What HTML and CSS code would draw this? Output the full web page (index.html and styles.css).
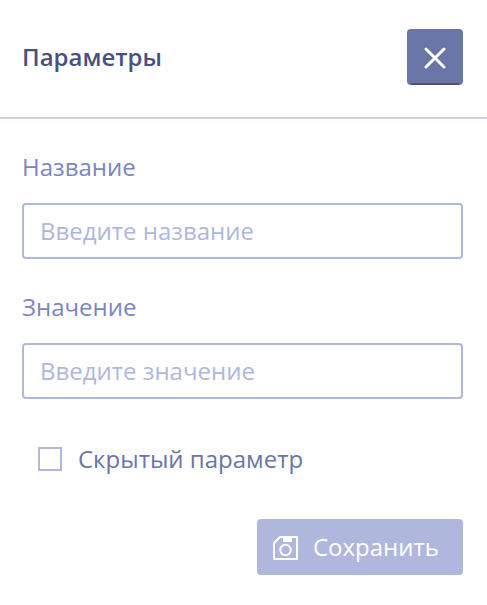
FILE: index.html
```
<!DOCTYPE html>
<html lang="ru">
<head>
  <meta charset="UTF-8" />
  <meta name="viewport" content="width=device-width, initial-scale=1.0" />
  <title>Параметры</title>
  <link rel="stylesheet" href="styles.css">
</head>
<body>

  <header class="header">
    <h1>Параметры</h1>
    <button type="button" class="close-button" aria-label="Закрыть">
      <svg width="24" height="26" viewBox="0 0 24 26" fill="none" stroke="currentColor" stroke-width="3">
        <path d="M3 5L21 23M21 5L3 23" stroke-linecap="round" />
      </svg>
    </button>
  </header>

  <form class="form">
    <div class="field">
      <label for="name">Название</label>
      <input type="text" id="name" placeholder="Введите название">
    </div>

    <div class="field">
      <label for="value">Значение</label>
      <input type="text" id="value" placeholder="Введите значение">
    </div>

    <label class="checkbox">
      <input type="checkbox" id="hidden">
      Скрытый параметр
    </label>

    <button type="submit" class="save-button" disabled>
      <svg width="24" height="26" viewBox="0 0 24 26" fill="none" stroke="currentColor" stroke-width="2">
        <path d="M7 3H24V25H1V9Z" stroke-linejoin="round" />
        <path d="M10 2H19V8H10Z" fill="currentColor" stroke="none" />
        <circle cx="12.5" cy="16" r="5.25" />
      </svg>
      Сохранить
    </button>
  </form>

</body>
</html>
```

FILE: styles.css
```
* {
  box-sizing: border-box;
  margin: 0;
  padding: 0;
}

body {
  background: #fff;
  font-family: "Open Sans", "Noto Sans", sans-serif;
  font-size: 24px;
  line-height: 32px;
}

button,
input {
  font: inherit;
}

svg {
  display: block;
  flex: none;
  overflow: visible;
}

.header {
  display: flex;
  align-items: center;
  justify-content: space-between;
  padding: 29px 24px 32px 22px;
  border-bottom: 2px solid #cacfe7;
}

h1 {
  color: #475280;
  font-size: 24px;
  font-weight: 600;
}

.close-button {
  display: flex;
  align-items: center;
  justify-content: center;
  width: 56px;
  height: 56px;
  border: none;
  border-radius: 4px;
  background: #6a76a8 linear-gradient(#475280, #475280) center bottom / 48px 2px no-repeat;
  color: #fff;
  cursor: pointer;
}

.form {
  display: flex;
  flex-direction: column;
  padding: 0 24px 30px 22px;
}

.field {
  display: flex;
  flex-direction: column;
  gap: 20px;
  padding-top: 32px;
  color: #7986c0;
}

.field input {
  width: 100%;
  height: 56px;
  padding: 0 16px 2px;
  border: 2px solid #afb7dc;
  border-radius: 4px;
  background: #fff;
  color: #475280;
  outline: none;
}

.field input:focus {
  border-color: #6a76a8;
}

.field input::placeholder {
  color: #afb7dc;
  opacity: 1;
}

.checkbox {
  display: flex;
  align-items: center;
  gap: 16px;
  margin: 44px 16px;
  color: #6a76a8;
  cursor: pointer;
}

.checkbox input {
  appearance: none;
  width: 24px;
  height: 24px;
  border: 2px solid #afb7dc;
}

.checkbox input:checked {
  background: #6a76a8;
}

.save-button {
  display: flex;
  align-items: center;
  align-self: flex-end;
  gap: 16px;
  height: 56px;
  padding: 0 24px 0 16px;
  border: none;
  border-radius: 4px;
  background: #afb7dc;
  color: #fff;
}
```
